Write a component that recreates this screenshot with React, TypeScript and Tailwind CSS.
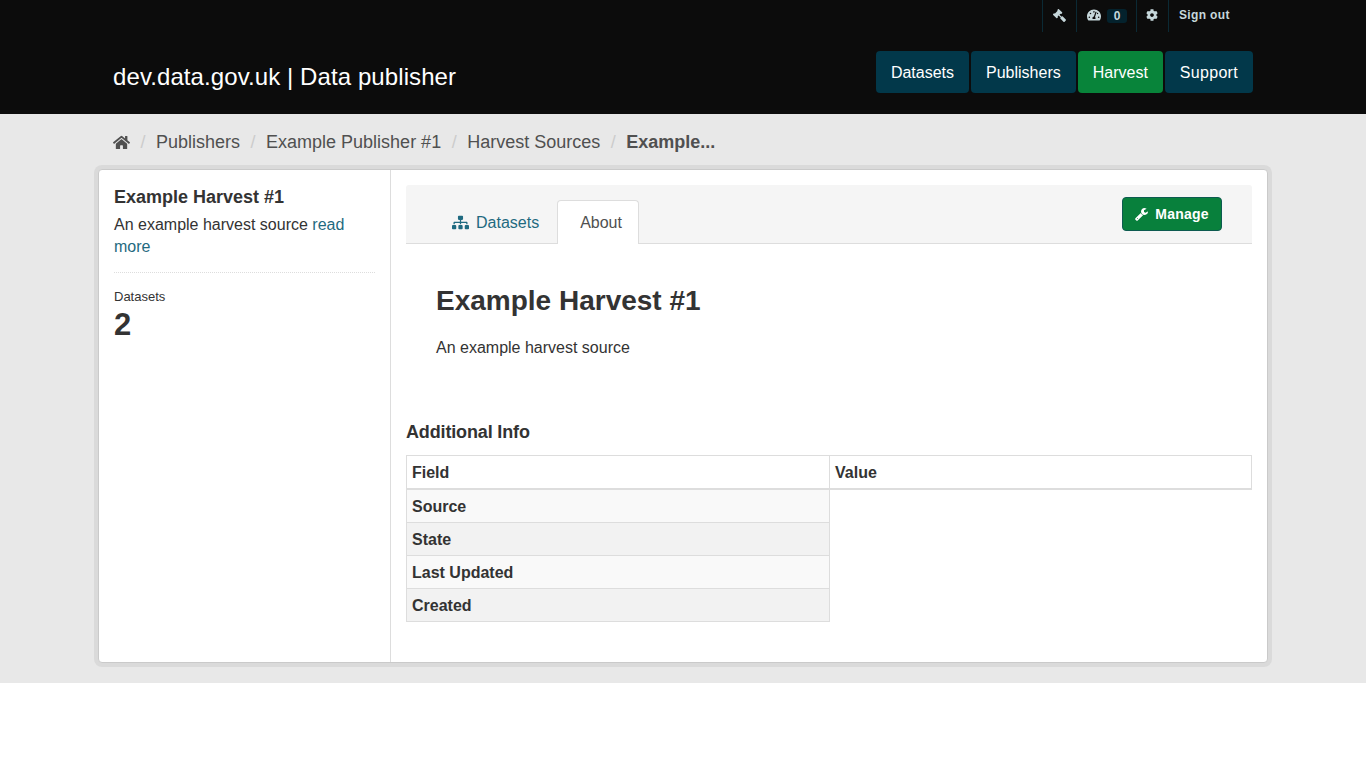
import React from 'react';
import { FaHome, FaGavel, FaTachometerAlt, FaCog, FaSitemap } from 'react-icons/fa';

const crumbs = ['Publishers', 'Example Publisher #1', 'Harvest Sources'];
const rows = ['Source', 'State', 'Last Updated', 'Created'];

// slimmer than the react-icons wrench, closer to the one in the button
const WrenchIcon = () => (
  <svg viewBox="0 0 1792 1792" className="w-[14px] h-[14px]" fill="currentColor">
    <path d="M384 1472q0-26-19-45t-45-19-45 19-19 45 19 45 45 19 45-19 19-45zm644-420l-682 682q-37 37-90 37-52 0-91-37l-106-108q-38-36-38-90 0-53 38-91l681-681q39 98 114.5 173.5t173.5 114.5zm634-435q0 39-23 106-47 134-164.5 217.5t-258.5 83.5q-185 0-316.5-131.5t-131.5-316.5 131.5-316.5 316.5-131.5q58 0 121.5 16.5t107.5 46.5q16 11 16 28t-16 28l-293 169v224l193 107q5-3 79-48.5t135.5-81 70.5-35.5q15 0 23.5 10t8.5 25z" />
  </svg>
);

const Header = () => (
  <header className="h-[114px] bg-[#0c0c0c]">
    <div className="w-[1140px] mx-auto">
      <div className="flex justify-end h-[32px]">
        <div className="flex text-[#c6d7db] mr-[-2px]">
          <span className="w-[34px] border-l border-[#0b2a35] flex items-center justify-center pb-[2px]">
            <FaGavel className="w-[13px] h-[13px] -scale-x-100" />
          </span>
          <span className="w-[60px] border-l border-[#0b2a35] flex items-center pl-[10px] pb-[2px]">
            <FaTachometerAlt className="w-[14px] h-[14px]" />
            <span className="ml-[6px] w-[20px] h-[14px] mt-[1px] rounded-[3px] bg-[#04222d] text-[12px] leading-[14px] font-bold text-center">0</span>
          </span>
          <span className="w-[32px] border-l border-[#0b2a35] flex items-center pl-[9px] pb-[2px]">
            <FaCog className="w-[12px] h-[12px]" />
          </span>
          <span className="w-[87px] border-l border-[#0b2a35] flex items-center pl-[10px] pb-[2px] text-[12px] tracking-[0.35px] font-bold">
            Sign out
          </span>
        </div>
      </div>
      <div className="flex items-start justify-between mt-[19px]">
        <div className="text-[24px] leading-[50px] pt-[1px] text-white tracking-[0.09px]">dev.data.gov.uk | Data publisher</div>
        <nav className="flex gap-[2px] text-[16px] text-white">
          <a className="h-[42px] px-[15px] pt-[1px] flex items-center rounded-[4px] bg-[#02384a]">Datasets</a>
          <a className="h-[42px] px-[15px] pt-[1px] flex items-center rounded-[4px] bg-[#02384a]">Publishers</a>
          <a className="h-[42px] px-[15px] pt-[1px] flex items-center rounded-[4px] bg-[#08843a]">Harvest</a>
          <a className="h-[42px] px-[15px] pt-[1px] flex items-center rounded-[4px] bg-[#02384a] tracking-[0.3px]">Support</a>
        </nav>
      </div>
    </div>
  </header>
);

const Breadcrumb = () => (
  <div className="w-[1140px] mx-auto h-[55px] pt-[2px] flex items-center text-[18px] text-[#505050]">
    <FaHome className="w-[17px] h-[17px]" />
    {crumbs.map((c) => (
      <React.Fragment key={c}>
        <span className="w-[26px] text-center text-[#cccccc]">/</span>
        <span>{c}</span>
      </React.Fragment>
    ))}
    <span className="w-[26px] text-center text-[#cccccc]">/</span>
    <span className="font-bold">Example...</span>
  </div>
);

const Sidebar = () => (
  <aside className="w-[292px] shrink-0 border-r border-[#dddddd] px-[15px] pt-[15px]">
    <h2 className="text-[18px] leading-[25px] font-bold text-[#333333]">Example Harvest #1</h2>
    <p className="mt-[4px] text-[16px] leading-[22px] text-[#333333]">
      An example harvest source <a className="text-[#1f6a80]">read more</a>
    </p>
    <div className="mt-[14px] border-t border-dotted border-[#dddddd]" />
    <div className="mt-[16px] text-[13px] leading-[16px] text-[#333333]">Datasets</div>
    <div className="mt-[4px] text-[31px] leading-[32px] font-bold text-[#333333]">2</div>
  </aside>
);

const Main = () => (
  <section className="flex-1 px-[15px] pt-[15px]">
    <div className="h-[59px] bg-[#f5f5f5] border-b border-[#dddddd] rounded-t-[3px] flex items-end justify-between">
      <div className="flex items-end pl-[46px] text-[16px] mb-[-1px]">
        <a className="h-[44px] pt-[1px] flex items-center gap-[7px] text-[#1f6a80] mr-[18px]">
          <FaSitemap className="w-[17px] h-[17px]" />
          Datasets
        </a>
        <a className="h-[44px] w-[82px] pl-[22px] flex items-center bg-white text-[#505050] border border-b-0 border-[#dddddd] rounded-t-[4px]">
          About
        </a>
      </div>
      <button className="h-[34px] w-[100px] self-start mt-[12px] mr-[30px] rounded-[4px] bg-[#08803c] border border-[#0d5b50] text-white text-[14px] tracking-[0.2px] font-bold flex items-center justify-center gap-[6px]">
        <WrenchIcon />
        Manage
      </button>
    </div>
    <div className="px-[30px]">
      <h1 className="mt-[39px] text-[28px] leading-[36px] font-bold text-[#333333]">Example Harvest #1</h1>
      <p className="mt-[18px] text-[16px] leading-[22px] text-[#333333]">An example harvest source</p>
    </div>
    <h3 className="mt-[61px] text-[18px] leading-[25px] tracking-[-0.15px] font-bold text-[#333333]">Additional Info</h3>
    <table className="mt-[10px] w-[846px] table-fixed border-collapse text-[16px] text-[#333333]">
      <thead>
        <tr>
          <th className="w-[423px] h-[33px] pt-[2px] border border-b-2 border-[#dddddd] px-[5px] text-left font-bold">Field</th>
          <th className="border border-b-2 pt-[2px] border-[#dddddd] px-[5px] text-left font-bold">Value</th>
        </tr>
      </thead>
      <tbody>
        {rows.map((r, i) => (
          <tr key={r}>
            <th className={`${i === 0 ? 'h-[34px] pt-[2px]' : 'h-[33px] pt-[1px]'} border border-[#dddddd] px-[5px] text-left font-bold ${i % 2 === 0 ? 'bg-[#f9f9f9]' : 'bg-[#f2f2f2]'}`}>{r}</th>
            <td />
          </tr>
        ))}
      </tbody>
    </table>
  </section>
);

export default function App() {
  return (
    <div className="font-['Liberation_Sans',Arial,sans-serif]">
      <Header />
      <div className="h-[569px] bg-[#e8e8e8]">
        <Breadcrumb />
        <div className="w-[1170px] h-[494px] mx-auto flex bg-white border border-[#cacaca] rounded-[4px] shadow-[0_0_0_4px_#dadada]">
          <Sidebar />
          <Main />
        </div>
      </div>
    </div>
  );
}
